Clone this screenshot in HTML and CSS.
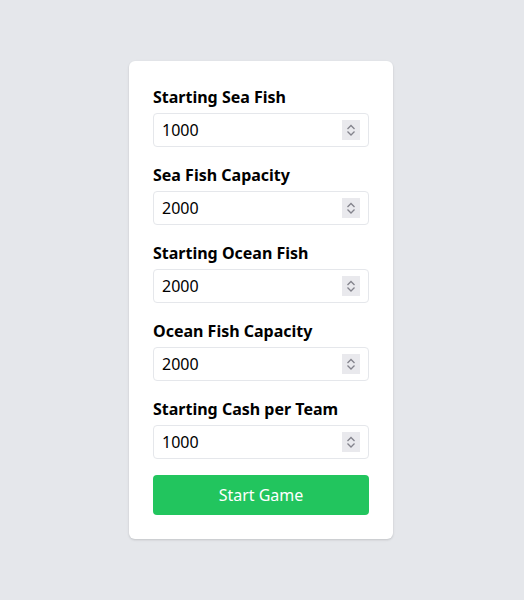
FILE: index.html
```html
<!DOCTYPE html>
<html>
<head>
<meta charset="utf-8">
<link rel="stylesheet" href="styles.css">
</head>
<body>
<div class="page">
  <form class="card">
    <div class="field">
      <label class="label">Starting Sea Fish</label>
      <div class="box"><input class="input" type="number" value="1000"><span class="spin"><svg width="18" height="20" viewBox="0 0 18 20"><path d="M5.5 9 L9 5.5 L12.5 9 M5.5 11.5 L9 15 L12.5 11.5" fill="none" stroke="#83838c" stroke-width="1.3"/></svg></span></div>
    </div>
    <div class="field">
      <label class="label">Sea Fish Capacity</label>
      <div class="box"><input class="input" type="number" value="2000"><span class="spin"><svg width="18" height="20" viewBox="0 0 18 20"><path d="M5.5 9 L9 5.5 L12.5 9 M5.5 11.5 L9 15 L12.5 11.5" fill="none" stroke="#83838c" stroke-width="1.3"/></svg></span></div>
    </div>
    <div class="field">
      <label class="label">Starting Ocean Fish</label>
      <div class="box"><input class="input" type="number" value="2000"><span class="spin"><svg width="18" height="20" viewBox="0 0 18 20"><path d="M5.5 9 L9 5.5 L12.5 9 M5.5 11.5 L9 15 L12.5 11.5" fill="none" stroke="#83838c" stroke-width="1.3"/></svg></span></div>
    </div>
    <div class="field">
      <label class="label">Ocean Fish Capacity</label>
      <div class="box"><input class="input" type="number" value="2000"><span class="spin"><svg width="18" height="20" viewBox="0 0 18 20"><path d="M5.5 9 L9 5.5 L12.5 9 M5.5 11.5 L9 15 L12.5 11.5" fill="none" stroke="#83838c" stroke-width="1.3"/></svg></span></div>
    </div>
    <div class="field">
      <label class="label">Starting Cash per Team</label>
      <div class="box"><input class="input" type="number" value="1000"><span class="spin"><svg width="18" height="20" viewBox="0 0 18 20"><path d="M5.5 9 L9 5.5 L12.5 9 M5.5 11.5 L9 15 L12.5 11.5" fill="none" stroke="#83838c" stroke-width="1.3"/></svg></span></div>
    </div>
    <button class="button" type="button">Start Game</button>
  </form>
</div>
</body>
</html>
```
FILE: styles.css
```css
html, body {
  margin: 0;
  padding: 0;
  background: #e5e7eb;
  font-family: "Noto Sans", "Open Sans", sans-serif;
}
.page {
  min-height: 600px;
  display: flex;
  align-items: center;
  justify-content: center;
}
.card {
  width: 264px;
  box-sizing: border-box;
  padding: 24px;
  background: #ffffff;
  border-radius: 6px;
  box-shadow: 0 1px 3px rgba(0,0,0,0.1), 0 1px 2px rgba(0,0,0,0.06);
  display: flex;
  flex-direction: column;
  gap: 16px;
  margin-right: 2px;
}
.field {
  display: flex;
  flex-direction: column;
  gap: 4px;
}
.label {
  font-size: 16px;
  line-height: 24px;
  font-weight: 700;
  color: #000;
}
.box {
  box-sizing: border-box;
  height: 34px;
  display: flex;
  align-items: center;
  border: 1px solid #e5e7eb;
  border-radius: 4px;
  background: #fff;
  padding-right: 8px;
}
.input {
  flex: 1;
  min-width: 0;
  box-sizing: border-box;
  height: 32px;
  padding: 4px 8px;
  font-family: inherit;
  font-size: 16px;
  line-height: 24px;
  color: #000;
  border: none;
  background: transparent;
  outline: none;
  -moz-appearance: textfield;
}
.input::-webkit-inner-spin-button,
.input::-webkit-outer-spin-button {
  -webkit-appearance: none;
  margin: 0;
}
.spin {
  width: 18px;
  height: 20px;
  background: #e9e9ed;
  display: flex;
}
.button {
  height: 40px;
  border: none;
  border-radius: 4px;
  background: #22c55e;
  color: #fff;
  font-family: inherit;
  font-size: 16px;
  cursor: pointer;
}
```
